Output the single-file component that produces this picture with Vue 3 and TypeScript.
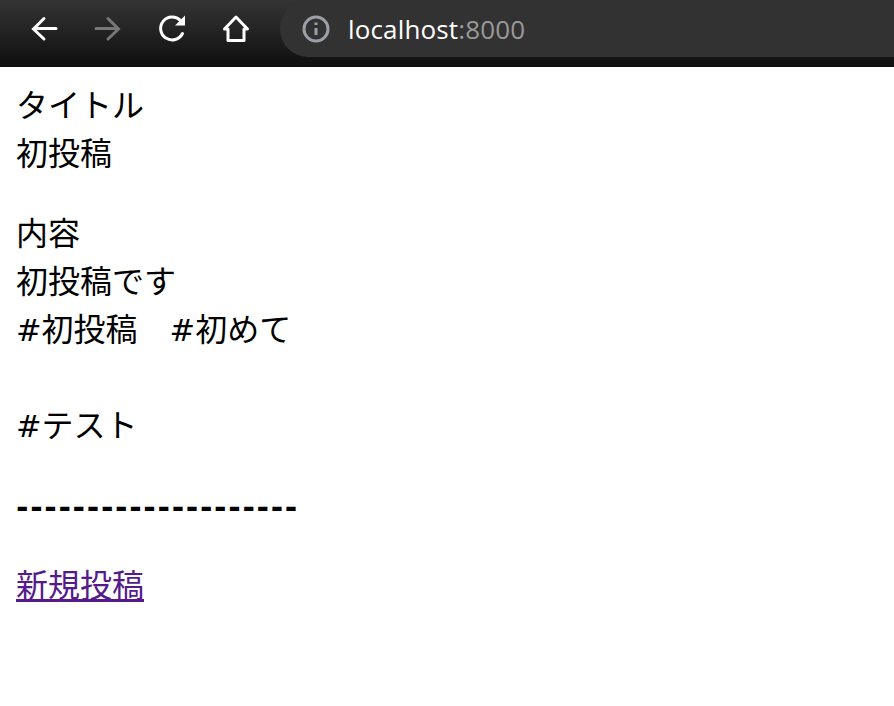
<script setup lang="ts">
const title = 'タイトル'
</script>

<template>
  <div class="page">
    <header class="toolbar">
      <nav class="nav">
        <svg class="icon" viewBox="0 0 32 32"><path d="M28 15.5H7M16 5.5 5.5 16 16 26" /></svg>
        <svg class="icon dim" viewBox="0 0 32 32"><path d="M4 15.5H25M16 5.5 26.5 16 16 26" /></svg>
        <svg class="icon reload" viewBox="0 0 32 32"><path d="M25.5 20.5A11.5 11.5 0 1 1 23.5 7.5" /><path class="solid" d="M18 12.5 28 2.5V12.5Z" /></svg>
        <svg class="icon home" viewBox="0 0 32 32"><path d="M4.5 16 16 4 27.5 16H24V27.5H8V16Z" stroke-linejoin="round" /></svg>
      </nav>
      <div class="omnibox">
        <svg class="info" viewBox="0 0 28 28"><circle cx="14" cy="14" r="12" /><path d="M14 13V20M14 7.5V10" /></svg>
        <span class="host">localhost</span><span class="port">:8000</span>
      </div>
    </header>
    <main class="content">
      <p>{{ title }}<br />初投稿</p>
      <p>内容<br />初投稿です<br /><span class="hash">#</span>初投稿　<span class="hash">#</span>初めて<br /><br /><span class="hash">#</span>テスト</p>
      <p class="rule">--------------------</p>
      <p><a class="link" href="#">新規投稿</a></p>
    </main>
  </div>
</template>

<style scoped>
.page {
  width: 894px;
  height: 706px;
  overflow: hidden;
  background: #fff;
  font-family: "Noto Sans CJK JP", "Liberation Sans", sans-serif;
}
.toolbar {
  height: 67px;
  display: flex;
  align-items: flex-start;
  background: linear-gradient(#343434, #0f0f0f);
  box-sizing: border-box;
}
.nav {
  display: flex;
  gap: 32px;
  padding: 13px 0 0 28px;
}
.icon {
  width: 32px;
  height: 32px;
  fill: none;
  stroke: #fff;
  stroke-width: 3;
  stroke-linecap: round;
}
.icon.reload {
  margin-left: 1px;
}
.icon.home {
  margin-left: -1px;
}
.icon .solid {
  fill: #fff;
  stroke: none;
}
.icon.dim {
  stroke: #777;
}
.omnibox {
  flex: 1;
  height: 57px;
  margin-left: 28px;
  border-radius: 28px 0 0 28px;
  background: #323232;
  display: flex;
  align-items: center;
  padding: 0 0 0 22px;
  font-family: "Open Sans", "Noto Sans", sans-serif;
  font-size: 26px;
  letter-spacing: 0.15px;
}
.info {
  width: 28px;
  height: 28px;
  margin-right: 18px;
  fill: none;
  stroke: #9aa0a6;
  stroke-width: 3;
}
.host {
  color: #fff;
}
.port {
  color: #999;
}
.content {
  padding: 12px 16px 0;
  font-size: 32px;
  line-height: 48px;
  color: #000;
}
.content p {
  margin: 0 0 32px;
}
.hash {
  font-family: "DejaVu Sans", sans-serif;
  font-size: 30.5px;
  line-height: 0;
}
.content .rule {
  font-family: "DejaVu Sans", sans-serif;
  letter-spacing: 1.7px;
  font-weight: 700;
  font-size: 30px;
  padding-top: 5px;
  margin-bottom: 27px;
}
.link {
  color: #551a8b;
  text-decoration: underline;
}
</style>

<style>
html,
body {
  margin: 0;
  background: #fff;
}
</style>
